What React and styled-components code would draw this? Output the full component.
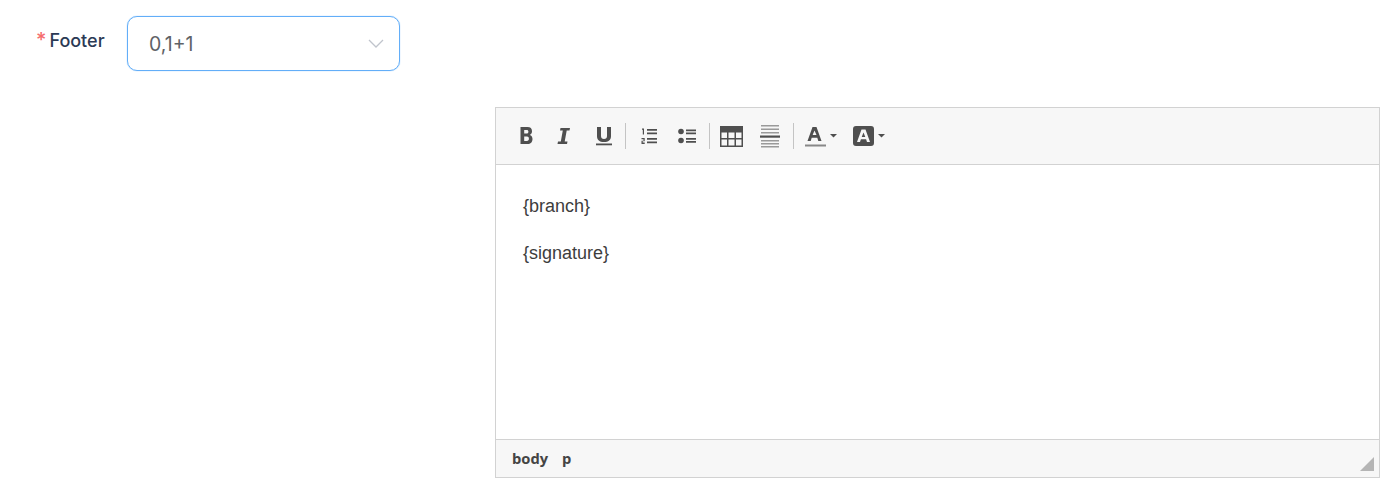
import styled, { createGlobalStyle } from "styled-components";

const Global = createGlobalStyle`
    html, body { margin: 0; padding: 0; background: #fff; }
    body { font-family: "Liberation Sans", Arial, sans-serif; }
`;

const Page = styled.div`
    width: 1400px;
    height: 486px;
    overflow: hidden;
    box-sizing: border-box;
    padding-top: 16px;
`;
const FormRow = styled.div`
    display: flex;
    align-items: flex-start;
    padding-left: 36px;
`;
const Label = styled.label`
    width: 91px;
    font-family: Inter, sans-serif;
    font-size: 18px;
    font-weight: 500;
    line-height: 50px;
    color: #2b3a55;
`;
const Star = styled.span`
    color: #f56c6c;
    font-size: 20px;
    line-height: 0;
    margin-right: 3px;
`;
const Select = styled.div`
    width: 273px;
    height: 55px;
    box-sizing: border-box;
    border: 1px solid #63aef8;
    box-shadow: 0 0 1px #63aef8;
    border-radius: 10px;
    display: flex;
    align-items: center;
    justify-content: space-between;
    padding: 0 15px 0 21px;
    font-family: Inter, sans-serif;
    font-size: 19.5px;
    color: #606266;
`;
const Editor = styled.div`
    width: 885px;
    height: 371px;
    box-sizing: border-box;
    margin: 36px 0 0 495px;
    border: 1px solid #d2d2d2;
    display: flex;
    flex-direction: column;
`;
const Toolbar = styled.div`
    height: 57px;
    box-sizing: border-box;
    background: #f7f7f7;
    border-bottom: 1px solid #d2d2d2;
    display: flex;
    align-items: center;
    padding-left: 21px;
    color: #4f4f4f;
`;
const Tool = styled.div`
    width: ${(p) => p.$w || 37}px;
    height: 26px;
    display: flex;
    align-items: center;
    flex: none;
`;
const Divider = styled.div`
    width: 1px;
    height: 26px;
    background: #c4c4c4;
    margin: 0 ${(p) => p.$right || 10}px 0 0;
    flex: none;
`;
const Content = styled.div`
    flex: 1;
    padding: 31px 27px 0;
    font-size: 18px;
    line-height: 21px;
    color: #3d3d3d;
`;
const Para = styled.p`
    margin: 0 0 26px;
`;
const StatusBar = styled.div`
    height: 38px;
    box-sizing: border-box;
    background: #f7f7f7;
    border-top: 1px solid #d2d2d2;
    display: flex;
    align-items: center;
    gap: 14px;
    padding: 0 0 2px 16px;
    position: relative;
    font-family: "Open Sans", sans-serif;
    font-size: 14.7px;
    font-weight: 700;
    color: #444;
`;
const Grip = styled.svg`
    position: absolute;
    right: 5px;
    bottom: 6px;
`;

const Icon = ({ w = 24, h = 24, children }) => (
    <svg width={w} height={h} viewBox={`0 0 ${w} ${h}`} fill="currentColor">
        {children}
    </svg>
);

const Caret = () => <path d="M0 0h7l-3.500 3.500z" />;

const App = () => {
    return (
        <Page>
            <Global />
            <FormRow>
                <Label><Star>*</Star>Footer</Label>
                <Select>
                    0,1+1
                    <svg width="16" height="9" viewBox="0 0 16 9" fill="none" stroke="#c0c4cc" strokeWidth="1.3">
                        <path d="M1 1l7 7 7-7" />
                    </svg>
                </Select>
            </FormRow>
            <Editor>
                <Toolbar>
                    <Tool $w={37}>
                        <Icon w={20} h={20}>
                            <path fillRule="evenodd" d="M3.500 1h7c3 0 4.500 1.500 4.500 4.300 0 1.700-.8 3-2.200 3.600 1.800.5 2.700 2 2.700 4.100 0 3-1.900 5-5 5h-7zm3.700 3.100v3.500h2.500c1.100 0 1.700-.7 1.700-1.800s-.6-1.700-1.700-1.700zm0 6.500v4.300h2.800c1.200 0 1.900-.8 1.900-2.100s-.7-2.200-1.900-2.200z" />
                        </Icon>
                    </Tool>
                    <Tool $w={40}>
                        <Icon w={20} h={20}>
                            <path d="M6.500 2H16l-.5 2.600h-2.800l-2 10.800h2.800L13 18H3.500l.5-2.600h2.800l2-10.800H6z" />
                        </Icon>
                    </Tool>
                    <Tool $w={31}>
                        <Icon w={20} h={20}>
                            <path d="M3 1h4v9c0 2 1 3 3 3s3-1 3-3V1h4v9.200c0 3.800-2.600 5.800-7 5.800s-7-2-7-5.800z" />
                            <rect x="2" y="17.500" width="16" height="1.800" />
                        </Icon>
                    </Tool>
                    <Divider $right={13} />
                    <Tool $w={38}>
                        <Icon w={20} h={20}>
                            <path d="M8 3h10v1.800H8zM8 6.500h10v1.800H8zM8 12h10v1.800H8zM8 15.500h10v1.800H8z" />
                            <path d="M3 2.500h2v6H3.800V3.700H3zM2.500 12h3.200v3.200H3.700v1.300h2V18H2.500v-3.200h2v-1.600h-2z" />
                        </Icon>
                    </Tool>
                    <Tool $w={32}>
                        <Icon w={20} h={20}>
                            <circle cx="4" cy="5.500" r="2.800" />
                            <circle cx="4" cy="14.500" r="2.800" />
                            <path d="M9 3.500h10v1.800H9zM9 6.500h10v1.800H9zM9 12h10v1.800H9zM9 15h10v1.800H9z" />
                        </Icon>
                    </Tool>
                    <Divider />
                    <Tool $w={40}>
                        <Icon w={23} h={21}>
                            <path fillRule="evenodd" d="M0 0h23v21H0zm1.500 6.500v5.500h5.500V6.500zm7 0v5.500h6V6.500zm7.500 0v5.500h5.500V6.500zM1.500 13.500v6h5.500v-6zm7 0v6h6v-6zm7.500 0v6h5.500v-6z" />
                        </Icon>
                    </Tool>
                    <Tool $w={33}>
                        <Icon w={20} h={24}>
                            <path opacity=".55" d="M1 1h18v1.500H1zM1 4.500h18V6H1zM1 8h18v1.500H1zM1 16h18v1.500H1zM1 19h18v1.500H1zM1 22h18v1.500H1z" />
                            <rect y="11.500" width="20" height="2.200" />
                        </Icon>
                    </Tool>
                    <Divider $right={11} />
                    <Tool $w={48}>
                        <Icon w={32} h={24}>
                            <path fillRule="evenodd" d="M5.500 3h4l5 14h-3.200l-1-3.200H4.700l-1 3.200H.5zm2 3.500L5.600 11h3.900z" transform="translate(2 0)" />
                            <rect y="20.500" width="21" height="2" fill="#888" />
                            <path transform="translate(25 10)" d="M0 0h7l-3.500 3.500z" />
                        </Icon>
                    </Tool>
                    <Tool $w={36}>
                        <Icon w={33} h={24}>
                            <path fillRule="evenodd" d="M3 2h15a3 3 0 0 1 3 3v14a3 3 0 0 1-3 3H3a3 3 0 0 1-3-3V5a3 3 0 0 1 3-3zm5.500 3.500L4 18h3l.9-2.700h5.200L14 18h3L12.500 5.500zM10.500 8.500l1.800 4.600H8.700z" />
                            <g transform="translate(25 10)"><Caret /></g>
                        </Icon>
                    </Tool>
                </Toolbar>
                <Content>
                    <Para>{"{branch}"}</Para>
                    <Para>{"{signature}"}</Para>
                </Content>
                <StatusBar>
                    <span>body</span>
                    <span>p</span>
                    <Grip width="14" height="14" viewBox="0 0 14 14">
                        <path d="M14 0v14H0z" fill="#b5b5b5" />
                    </Grip>
                </StatusBar>
            </Editor>
        </Page>
    );
};

export default App;
